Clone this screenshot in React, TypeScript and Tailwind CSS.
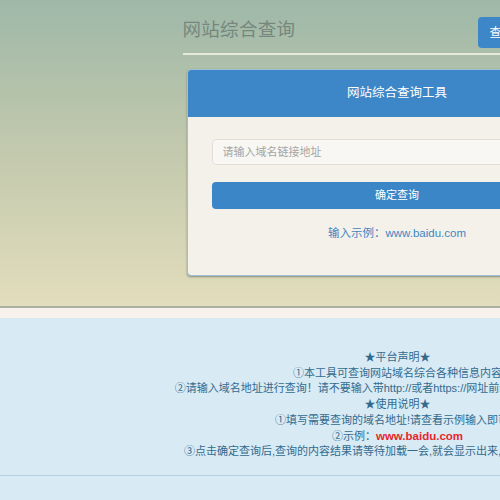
import React from "react";

const CN = { fontFamily: '"Liberation Sans", "Noto Sans CJK SC", sans-serif' };

export default function App() {
  return (
    <div className="w-[795px] min-h-[500px] bg-[#d8ebf5]" style={CN}>
      {/* top area with gradient */}
      <div className="h-[308px] bg-gradient-to-b from-[#9eb8a8] via-[#c3c9ad] to-[#e2ddbd] border-b-2 border-[#aab0a4]">
        <div className="mx-auto w-[430px] pt-[17px]">
          <div className="flex items-center justify-between h-[31px]">
            <h1 className="-mt-[5px] text-[18.5px] leading-none text-[#77877e] tracking-[0.3px]">网站综合查询</h1>
            <button className="h-[31px] w-[135px] rounded-[4px] bg-[#3d87c8] pl-[12px] text-left text-[12px] text-white">
              查询记录
            </button>
          </div>
          <div className="mt-[5px] h-[1.5px] bg-[#e6e9d8]" />

          <div className="ml-[4px] mt-[14px] w-[421px] overflow-hidden rounded-[4px] border border-[#9fbfd7] bg-[#f3f1ea] shadow-[0_1px_2px_rgba(80,90,80,0.6)]">
            <div className="flex h-[47px] items-center justify-center bg-[#3d87c8] text-[12.5px] text-white">
              网站综合查询工具
            </div>
            <div className="px-[24px] pt-[22px] pb-[33px]">
              <input
                className="block h-[26px] w-full rounded-[4px] border border-[#e2ded6] bg-[#f8f7f3] px-[10px] text-[11px] outline-none placeholder:text-[#a5a5a5]"
                placeholder="请输入域名链接地址"
              />
              <button className="mt-[17px] block h-[27px] w-full rounded-[4px] bg-[#3b86c6] text-[11px] text-white">
                确定查询
              </button>
              <p className="mt-[16px] text-center text-[11.5px] text-[#3f86c4]">输入示例：www.baidu.com</p>
            </div>
          </div>
        </div>
      </div>

      {/* footer */}
      <div className="h-[10px] bg-[#f8f2ec]" />
      <div className="bg-[#d8ebf5] pt-[32px]">
        <div className="text-center text-[11px] leading-[15.7px] text-[#336a8e]">
          <p>★平台声明★</p>
          <p>①本工具可查询网站域名综合各种信息内容</p>
          <p>②请输入域名地址进行查询！请不要输入带http://或者https://网址前缀，直接输入域名即可！</p>
          <p>★使用说明★</p>
          <p>①填写需要查询的域名地址!请查看示例输入即可！</p>
          <p>
            ②示例：<span className="font-bold text-[11.5px] text-[#e8262c]">www.baidu.com</span>
          </p>
          <p>③点击确定查询后,查询的内容结果请等待加载一会,就会显示出来,请大家耐心等待一下！</p>
        </div>
        <div className="mt-[15px] h-px bg-[#b6d1df]" />
        <div className="h-[26px]" />
      </div>
    </div>
  );
}
